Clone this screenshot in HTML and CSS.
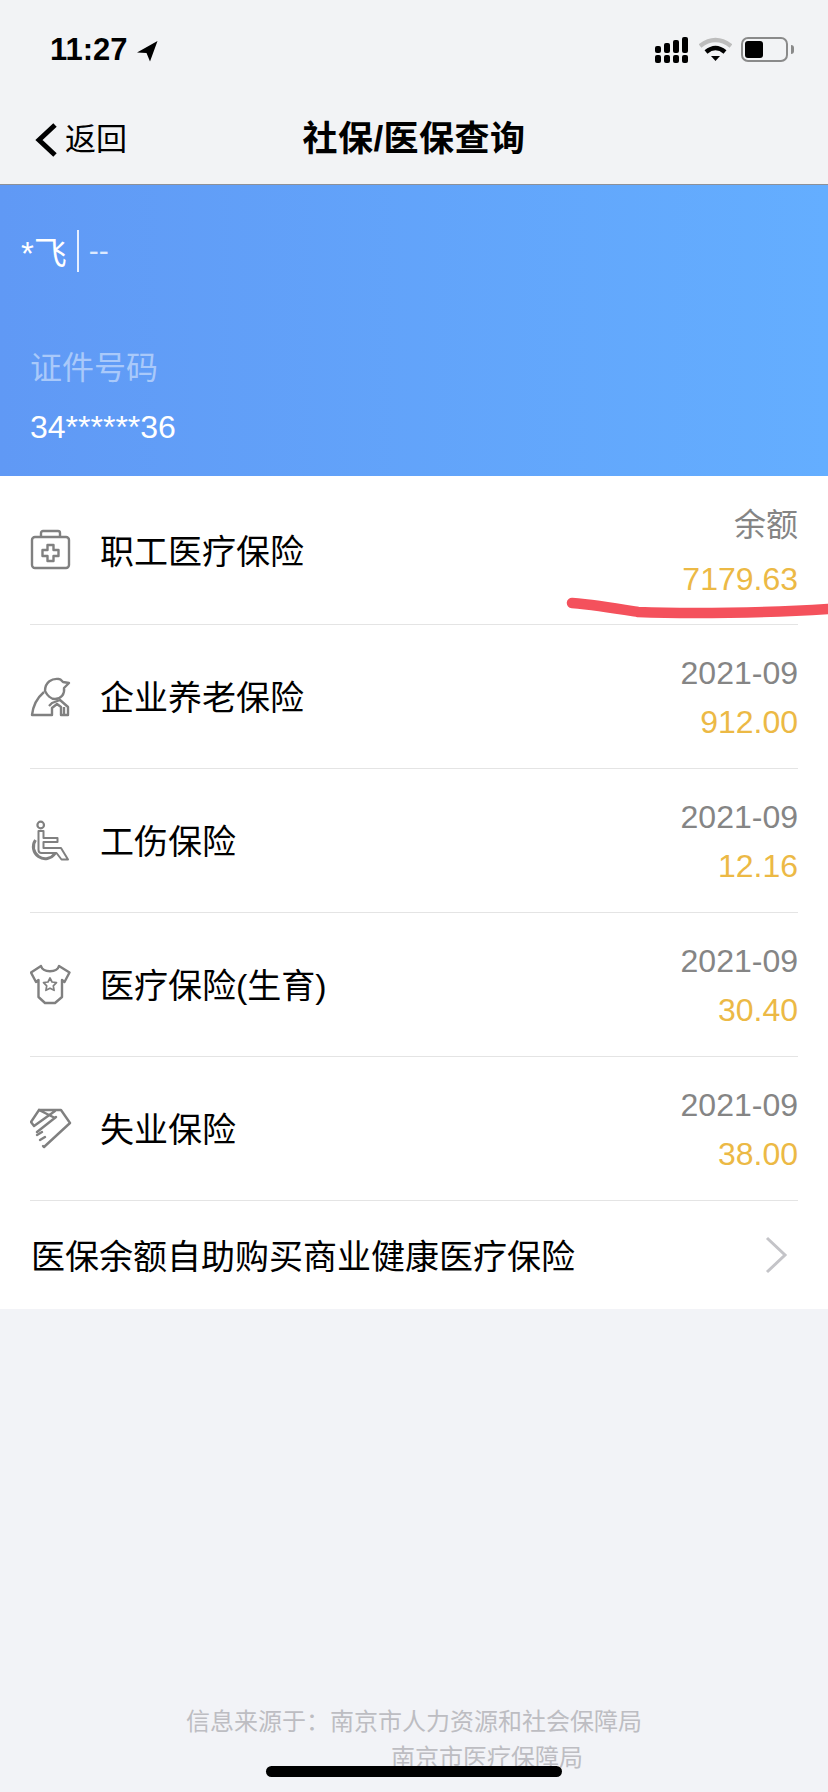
FILE: index.html
```html
<!DOCTYPE html>
<html lang="zh"><head><meta charset="utf-8"><title>社保/医保查询</title><link rel="stylesheet" href="styles.css"></head>
<body>
<div class="status"><div class="time">11:27<svg class="loc" width="22" height="22" viewBox="0 0 22 22"><path d="M21.500 1 1 12.500l9.500.5 3.500 8.500z" fill="#000"/></svg></div>
<div class="sicons">
<svg class="sig" width="33" height="26" viewBox="0 0 33 26"><g fill="#000"><rect x="0" y="18" width="6" height="8" rx="2"/><rect x="9" y="18" width="6" height="8" rx="2"/><rect x="18" y="18" width="6" height="8" rx="2"/><rect x="27" y="18" width="6" height="8" rx="2"/><rect x="0" y="9" width="6" height="7" rx="2"/><rect x="9" y="6" width="6" height="10" rx="2"/><rect x="18" y="3" width="6" height="13" rx="2"/><rect x="27" y="0" width="6" height="16" rx="2"/></g></svg>
<svg class="wifi" width="33" height="24" viewBox="0 0 33 24"><path d="M1 9Q16.500-3 32 9" fill="none" stroke="#bdbdbd" stroke-width="4.500"/><path d="M7 15q9.500-8 19 0" fill="none" stroke="#000" stroke-width="4.500"/><path d="M12 19h9l-4.500 5z" fill="#000"/></svg>
<div class="battery"><span></span></div><i class="cap"></i></div></div>
<header class="nav"><div class="back"><svg width="24" height="36" viewBox="0 0 24 36"><path d="M21 3 5 18l16 15" fill="none" stroke="#000" stroke-width="5"/></svg>返回</div><h1>社保/医保查询</h1></header>
<section class="hero"><div class="name">*飞<b></b><em>--</em></div><div class="idl">证件号码</div><div class="idn">34******36</div></section>
<main class="list">
<div class="row first"><svg class="ic" viewBox="0 0 42 42"><g fill="none" stroke="#808080" stroke-width="2.400" stroke-linejoin="round"><rect x="2" y="8" width="37" height="31" rx="3"/><path d="M11 8V4a2 2 0 0 1 2-2h15a2 2 0 0 1 2 2v4"/><path d="M17.500 16h6v5h5v6h-5v5h-6v-5h-5v-6h5z"/></g></svg><div class="t">职工医疗保险</div><div class="v"><span>余额</span><strong>7179.63</strong></div></div>
<div class="row"><svg class="ic" viewBox="0 0 42 42"><g fill="none" stroke="#808080" stroke-width="2.400" stroke-linejoin="round"><path d="M15 15C15 6 22 2 29 3c2 0 3 2 4 3l6 1-5 5c1 6-3 11-9 11-4 0-8-4-10-8z"/><path d="M14 16C7 22 3 30 2 39h20v-7l5-4 4 3v8h7v-8l-8-7-8 3-3 3"/><path d="M34 39v-8"/></g></svg><div class="t">企业养老保险</div><div class="v"><span>2021-09</span><strong>912.00</strong></div></div>
<div class="row"><svg class="ic" viewBox="0 0 42 42"><g fill="none" stroke="#808080" stroke-linejoin="round"><circle cx="10.700" cy="5" r="3.300" stroke-width="2.200"/><path d="M8.500 11v19a3 3 0 0 0 3 3h15l5 6.500h6.500L31 28H13.500v-6h14v-4h-14v-7z" stroke-width="2"/><path d="M5.500 20A10.500 10.500 0 1 0 25 33.500" stroke-width="3"/></g></svg><div class="t">工伤保险</div><div class="v"><span>2021-09</span><strong>12.16</strong></div></div>
<div class="row"><svg class="ic" viewBox="0 0 42 42"><g fill="none" stroke="#808080" stroke-width="2.400" stroke-linejoin="round"><path d="M11 2 1 8.500 6 18l2.500-2v17l6.500 6h10l7-6V16l2.500 2L39.500 8.500 29 2c-2 7-16 7-18 0z"/><path d="m20 14 2 4 4.500.6-3.200 3.200.8 4.500-4.100-2.100-4.100 2.100.8-4.500-3.200-3.200 4.500-.6z" stroke-width="1.700"/></g></svg><div class="t">医疗保险(生育)</div><div class="v"><span>2021-09</span><strong>30.40</strong></div></div>
<div class="row"><svg class="ic" viewBox="0 0 42 42"><g fill="none" stroke="#808080" stroke-width="2.400" stroke-linejoin="round" stroke-linecap="round"><path d="M9 2h22l9 13-26 24M9 2 1 14l3 4L25 3M9 2l16 8M26 9 7 24"/><path d="m7 27 5-3M10 32l5-3M14 39l-1-1"/></g></svg><div class="t">失业保险</div><div class="v"><span>2021-09</span><strong>38.00</strong></div></div>
<div class="row link"><div class="t">医保余额自助购买商业健康医疗保险</div><svg width="24" height="38" viewBox="0 0 24 38"><path d="m3 2 18 17L3 36" fill="none" stroke="#c4c4c8" stroke-width="3"/></svg></div>
<svg class="scribble" width="262" height="24" viewBox="0 0 262 24"><path d="M6 7c25 2 48 6 66 9 50 2 130 1 190-3" fill="none" stroke="#f4515c" stroke-width="10.500" stroke-linecap="round"/></svg>
</main>
<footer class="foot"><div class="f1">信息来源于：南京市人力资源和社会保障局</div><div class="f2">南京市医疗保障局</div></footer>
<div class="home"></div>
</body></html>
```
FILE: styles.css
```css
*{box-sizing:border-box}
html,body{margin:0;padding:0}
body{position:relative;width:828px;height:1792px;overflow:hidden;background:#f2f3f7;font-family:"Liberation Sans","Noto Sans CJK SC",sans-serif;color:#000}
.status{height:100px;padding:30px 34px 0 50px;display:flex;justify-content:space-between;align-items:flex-start;background:#f2f3f5}
.time{display:flex;align-items:center;gap:8px;font-size:31px;font-weight:700;line-height:40px}
.loc{margin-top:2px}
.sicons{display:flex;align-items:flex-start;padding-top:7px}
.wifi{margin-left:11px}
.battery{width:47px;height:25px;border:2px solid #8a8a8a;border-radius:7px;padding:2px;margin-left:9px}
.battery span{display:block;width:18px;height:17px;background:#000;border-radius:3px}
.cap{width:3px;height:9px;background:#8a8a8a;margin:8px 0 0 3px;border-radius:0 3px 3px 0}
.nav{height:85px;background:#f2f3f5;border-bottom:1px solid #8c9098;position:relative;display:flex;align-items:center;justify-content:center;padding-bottom:6px}
.nav h1{margin:0;font-size:35px;letter-spacing:.5px;font-weight:700;line-height:44px}
.back{position:absolute;left:34px;top:20px;display:flex;align-items:center;gap:7px;font-size:31px;line-height:40px}
.hero{height:291px;background:linear-gradient(90deg,#6099f5,#64aeff);color:#fff;padding:44px 0 0 21px}
.name{display:flex;align-items:center;font-size:33px;height:44px}
.name b{width:2px;height:42px;background:#e6efff;margin:0 10px}
.name em{font-style:normal;font-size:30px;color:#dce9ff}
.idl{margin:73px 0 0 9px;font-size:32px;line-height:44px;color:#a9c9fa}
.idn{margin:17px 0 0 9px;font-size:32px;line-height:40px;color:#fff}
.list{position:relative;background:#fff;height:833px;padding:0 30px}
.row{height:144px;display:flex;align-items:center;border-bottom:1px solid #e4e4e4}
.first{height:149px}
.ic{width:42px;height:42px;flex:none;margin-right:28px}
.t{flex:1;font-size:34px;line-height:44px;margin-top:3px}
.v{text-align:right;display:flex;flex-direction:column;gap:15px;margin-top:1px}
.first .v{gap:20px;margin-top:3px}
.v span{font-size:32px;line-height:34px;color:#858585}
.v strong{font-size:32px;line-height:34px;font-weight:400;color:#ecb945}
.link{border-bottom:0;height:108px;padding-left:1px;padding-right:10px}
.link svg{flex:none}
.scribble{position:absolute;right:0;top:120px}
.foot{padding-top:395px;font-size:24px;color:#bdbdc2;line-height:36px}
.f1{padding-left:186px}
.f2{padding-left:391px}
.home{position:absolute;left:266px;top:1766px;width:296px;height:11px;border-radius:6px;background:#000}
```
